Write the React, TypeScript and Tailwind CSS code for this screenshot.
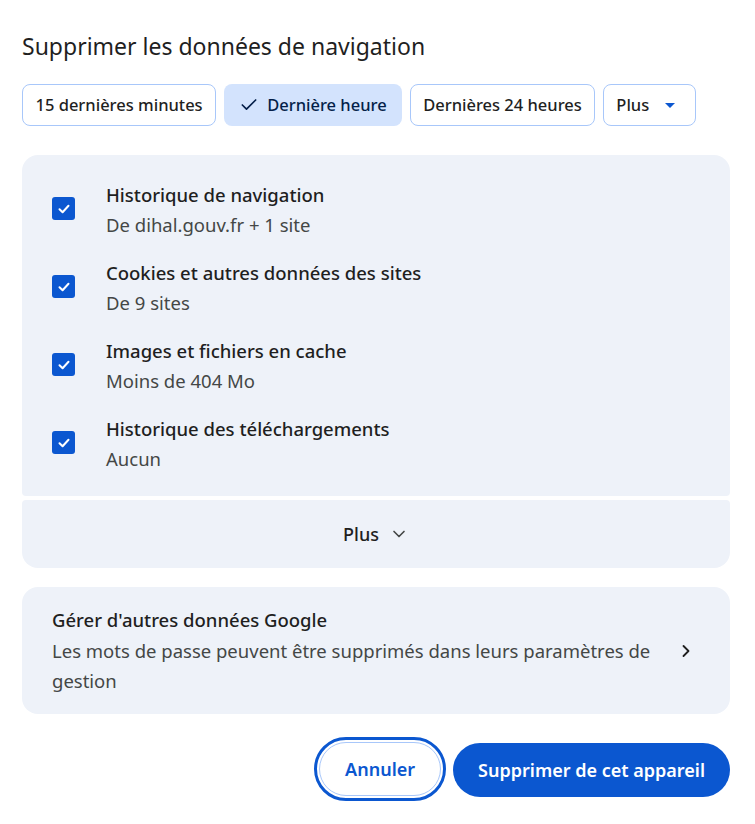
import { Check, ChevronDown, ChevronRight } from "lucide-react";

const ITEMS = [
  { title: "Historique de navigation", sub: "De dihal.gouv.fr + 1 site" },
  { title: "Cookies et autres données des sites", sub: "De 9 sites" },
  { title: "Images et fichiers en cache", sub: "Moins de 404 Mo" },
  { title: "Historique des téléchargements", sub: "Aucun" },
];

const CHIPS = ["15 dernières minutes", "Dernière heure", "Dernières 24 heures"];

function Checkbox() {
  return (
    <div className="flex h-[23px] w-[23px] shrink-0 items-center justify-center rounded-[3px] bg-[#0b57d0]">
      <svg width="14" height="14" viewBox="0 0 14 14" fill="none">
        <path d="M2.5 7.2 L5.6 10.2 L11.5 3.8" stroke="white" strokeWidth="2" strokeLinecap="round" strokeLinejoin="round" />
      </svg>
    </div>
  );
}

export default function App() {
  return (
    <div
      className="h-[824px] w-[755px] bg-white pt-[28px] pr-[25px] pl-[22px] text-[#1f1f1f]"
      style={{ fontFamily: '"Noto Sans", "Open Sans", sans-serif' }}
    >
      <h1 className="text-[23px] leading-[36px] font-normal">Supprimer les données de navigation</h1>

      <div className="mt-[20px] flex gap-[8px]">
        {CHIPS.map((c, i) =>
          i === 1 ? (
            <button
              key={c}
              className="flex h-[42px] items-center gap-[8px] rounded-[8px] bg-[#d3e3fd] px-[15px] text-[16.5px] font-medium text-[#041e49]"
            >
              <Check size={20} strokeWidth={2} />
              {c}
            </button>
          ) : (
            <button
              key={c}
              className="flex h-[42px] items-center rounded-[8px] border border-[#a8c7fa] px-[12.5px] text-[16.5px] font-medium text-[#1f1f1f]"
            >
              {c}
            </button>
          )
        )}
        <button className="flex h-[42px] items-center gap-[16px] rounded-[8px] border border-[#a8c7fa] pl-[12px] pr-[20px] text-[16.5px] font-medium text-[#1f1f1f]">
          Plus
          <svg width="10" height="5" viewBox="0 0 10 5">
            <path d="M0 0 L10 0 L5 5 Z" fill="#0b57d0" />
          </svg>
        </button>
      </div>

      <div className="mt-[29px] flex flex-col gap-[4px]">
        <div className="rounded-t-[16px] rounded-b-[4px] bg-[#eef2f9] px-[30px] pt-[27px] pb-[2px]">
          {ITEMS.map((it) => (
            <div key={it.title} className="flex h-[78px] items-start gap-[31px]">
              <div className="pt-[15px]">
                <Checkbox />
              </div>
              <div className="flex flex-col">
                <span className="text-[18.5px] leading-[26px] font-medium">{it.title}</span>
                <span className="mt-[4px] text-[18.5px] leading-[26px] text-[#444746]">{it.sub}</span>
              </div>
            </div>
          ))}
        </div>
        <button className="flex h-[68px] items-center justify-center gap-[10px] rounded-t-[4px] rounded-b-[16px] bg-[#eef2f9] text-[18px] font-medium">
          Plus
          <ChevronDown size={20} className="text-[#444746]" strokeWidth={2} />
        </button>
      </div>

      <div className="mt-[19px] flex items-center rounded-[16px] bg-[#eef2f9] pt-[19px] pb-[18px] pr-[34px] pl-[30px]">
        <div className="flex flex-1 flex-col">
          <span className="text-[18.5px] leading-[28px] font-medium">Gérer d'autres données Google</span>
          <span className="mt-[2px] pr-[20px] text-[18.5px] leading-[30px] text-[#444746]">
            Les mots de passe peuvent être supprimés dans leurs paramètres de gestion
          </span>
        </div>
        <ChevronRight size={20} strokeWidth={2.2} className="text-[#1f1f1f]" />
      </div>

      <div className="mt-[23px] flex justify-end gap-[7px]">
        <div className="rounded-full border-[3px] border-[#0b57d0] p-[2px]">
          <button className="flex h-[54px] items-center rounded-full border border-[#a8c7fa] px-[25px] text-[18px] font-semibold text-[#0b57d0]">
            Annuler
          </button>
        </div>
        <button className="mt-[6px] flex h-[54px] items-center rounded-full bg-[#0b57d0] px-[25px] text-[18px] font-semibold text-white">
          Supprimer de cet appareil
        </button>
      </div>
    </div>
  );
}
